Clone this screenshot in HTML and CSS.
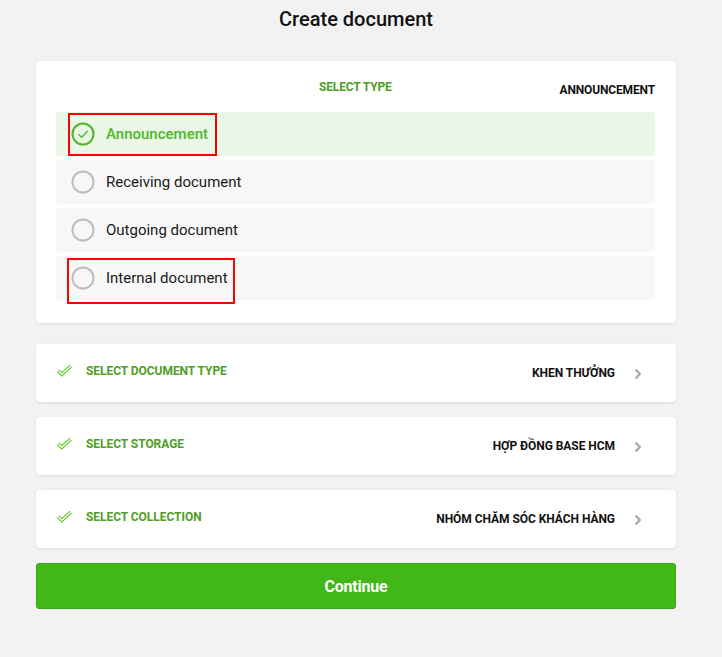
FILE: index.html
```html
<!DOCTYPE html>
<html>
<head>
<meta charset="utf-8">
<link rel="stylesheet" href="styles.css">
</head>
<body>
<div class="page">
  <h1 class="title">Create document</h1>

  <div class="card type-card">
    <div class="type-head">
      <span class="type-label">SELECT TYPE</span>
      <span class="type-value">ANNOUNCEMENT</span>
    </div>
    <div class="options">
      <div class="option selected">
        <span class="radio checked">
          <svg viewBox="0 0 24 24" width="24" height="24"><circle cx="12" cy="12" r="10.5" fill="none" stroke="#4cb82a" stroke-width="2"/><path d="M7.6 12.4 L10.6 15.3 L16.4 9.3" fill="none" stroke="#4cb82a" stroke-width="1.3" stroke-linecap="round" stroke-linejoin="round"/></svg>
        </span>
        <span class="option-text">Announcement</span>
        <span class="mark mark-a"></span>
      </div>
      <div class="option">
        <span class="radio"><svg viewBox="0 0 24 24" width="24" height="24"><circle cx="12" cy="12" r="10.5" fill="none" stroke="#bdbdbd" stroke-width="2"/></svg></span>
        <span class="option-text">Receiving document</span>
      </div>
      <div class="option">
        <span class="radio"><svg viewBox="0 0 24 24" width="24" height="24"><circle cx="12" cy="12" r="10.5" fill="none" stroke="#bdbdbd" stroke-width="2"/></svg></span>
        <span class="option-text">Outgoing document</span>
      </div>
      <div class="option">
        <span class="radio"><svg viewBox="0 0 24 24" width="24" height="24"><circle cx="12" cy="12" r="10.5" fill="none" stroke="#bdbdbd" stroke-width="2"/></svg></span>
        <span class="option-text">Internal document</span>
        <span class="mark mark-b"></span>
      </div>
    </div>
  </div>

  <div class="card step">
    <svg class="step-check" viewBox="0 0 17 13" width="17" height="13"><path d="M2 6.6 L5.8 10.3 L14.8 2" fill="none" stroke="#52c41a" stroke-width="3.4" stroke-linejoin="miter"/><path d="M2 6.6 L5.8 10.3 L14.8 2" fill="none" stroke="#fff" stroke-width="1.4" stroke-linejoin="miter"/></svg>
    <span class="step-label">SELECT DOCUMENT TYPE</span>
    <span class="step-value">KHEN THƯỞNG</span>
    <svg class="chev" viewBox="0 0 8 12" width="8" height="12"><path d="M1.6 1.4 L5.8 6 L1.6 10.6" fill="none" stroke="#a8a8a8" stroke-width="2.2"/></svg>
  </div>

  <div class="card step">
    <svg class="step-check" viewBox="0 0 17 13" width="17" height="13"><path d="M2 6.6 L5.8 10.3 L14.8 2" fill="none" stroke="#52c41a" stroke-width="3.4" stroke-linejoin="miter"/><path d="M2 6.6 L5.8 10.3 L14.8 2" fill="none" stroke="#fff" stroke-width="1.4" stroke-linejoin="miter"/></svg>
    <span class="step-label">SELECT STORAGE</span>
    <span class="step-value">HỢP ĐỒNG BASE HCM</span>
    <svg class="chev" viewBox="0 0 8 12" width="8" height="12"><path d="M1.6 1.4 L5.8 6 L1.6 10.6" fill="none" stroke="#a8a8a8" stroke-width="2.2"/></svg>
  </div>

  <div class="card step">
    <svg class="step-check" viewBox="0 0 17 13" width="17" height="13"><path d="M2 6.6 L5.8 10.3 L14.8 2" fill="none" stroke="#52c41a" stroke-width="3.4" stroke-linejoin="miter"/><path d="M2 6.6 L5.8 10.3 L14.8 2" fill="none" stroke="#fff" stroke-width="1.4" stroke-linejoin="miter"/></svg>
    <span class="step-label">SELECT COLLECTION</span>
    <span class="step-value">NHÓM CHĂM SÓC KHÁCH HÀNG</span>
    <svg class="chev" viewBox="0 0 8 12" width="8" height="12"><path d="M1.6 1.4 L5.8 6 L1.6 10.6" fill="none" stroke="#a8a8a8" stroke-width="2.2"/></svg>
  </div>

  <button class="continue">Continue</button>
</div>
</body>
</html>
```

FILE: styles.css
```css
* { box-sizing: border-box; }
html, body { margin: 0; padding: 0; }
body {
  background: #f2f2f2;
  font-family: Roboto, "Noto Sans", Arial, sans-serif;
  color: #111;
  width: 722px;
  height: 657px;
  overflow: hidden;
}
.page {
  width: 640px;
  margin: 0 auto 0 36px;
  padding-top: 6px;
}
.title {
  margin: 0;
  text-align: center;
  font-size: 20px;
  font-weight: 500;
  line-height: 26px;
  color: #111;
}
.card {
  background: #fff;
  border-radius: 4px;
  box-shadow: 0 1px 3px rgba(0,0,0,0.10);
}
.type-card {
  margin-top: 29px;
  padding: 18px 21px 23px 20px;
}
.type-head {
  position: relative;
  height: 18px;
  display: flex;
  justify-content: flex-end;
  align-items: center;
  font-size: 12px;
  font-weight: 700;
  letter-spacing: -0.15px;
}
.type-label {
  position: absolute;
  left: 263px;
  top: 1px;
  color: #4f9e26;
}
.type-value {
  color: #111;
  padding-top: 3px;
}
.options {
  margin-top: 15px;
  display: flex;
  flex-direction: column;
  gap: 4px;
}
.option {
  position: relative;
  height: 44px;
  background: #f7f7f7;
  border-radius: 3px;
  display: flex;
  align-items: center;
  padding-left: 15px;
}
.option.selected { background: #eaf6e6; }
.radio {
  width: 24px;
  height: 24px;
  display: flex;
}
.option-text {
  margin-left: 11px;
  font-size: 15px;
  color: #1a1a1a;
}
.selected .option-text {
  color: #4cb82a;
  font-weight: 500;
}
.mark {
  position: absolute;
  border: 2px solid #ff0000;
}
.mark-a { left: 12px; top: 1px; width: 149px; height: 43px; }
.mark-b { left: 11px; top: 2px; width: 168px; height: 46px; }

.step {
  margin-top: 15px;
  height: 58px;
  display: flex;
  align-items: flex-start;
  padding: 20px 0 0 20px;
}
.type-card + .step { margin-top: 21px; }
.step-check { margin-top: 0px; flex: none; }
.step-label {
  margin-left: 13px;
  margin-top: 0px;
  font-size: 12px;
  font-weight: 700;
  letter-spacing: -0.05px;
  color: #4f9e26;
}
.step-value {
  margin-left: auto;
  margin-top: 2px;
  font-size: 12px;
  font-weight: 700;
  letter-spacing: -0.05px;
  color: #111;
}
.chev {
  flex: none;
  margin: 4px 34px 0 19px;
}
.continue {
  display: block;
  width: 640px;
  height: 46px;
  margin-top: 15px;
  border: 1px solid #3aa512;
  border-radius: 3px;
  background: #42b718;
  color: #fff;
  font-family: Roboto, "Noto Sans", Arial, sans-serif;
  font-size: 16px;
  font-weight: 700;
  letter-spacing: -0.2px;
  cursor: pointer;
}
```
